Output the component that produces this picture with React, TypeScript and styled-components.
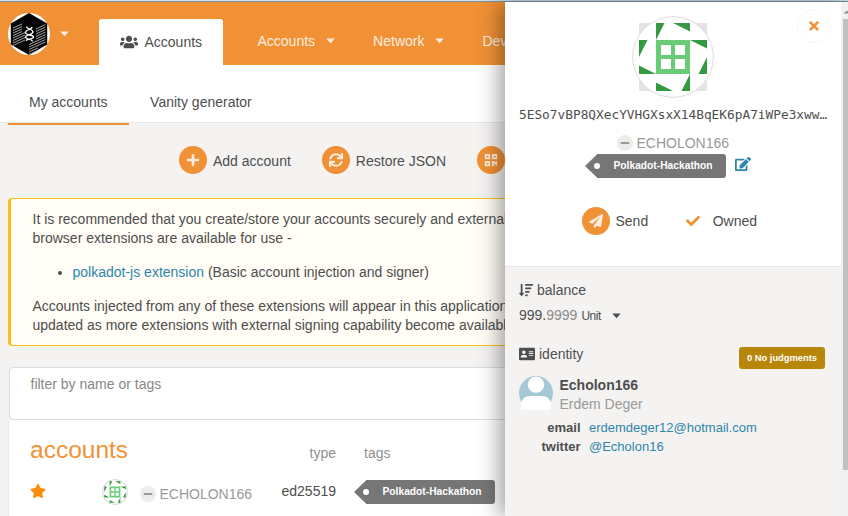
import React from 'react';
import styled, { createGlobalStyle, css } from 'styled-components';
import {
  FaAddressCard, FaCheck, FaEdit, FaMinus, FaPaperPlane, FaPlus, FaQrcode,
  FaSortAmountDown, FaStar, FaSync, FaTimes, FaUsers,
} from 'react-icons/fa';

const ORANGE = '#f19135';
const INK = '#4e4e4e';
const LINK = '#2e86ab';
const PAGE = '#f4f3f2';

const Global = createGlobalStyle`
  * { box-sizing: border-box; }
  html, body { margin: 0; overflow: hidden; }
  body { font: 14px/19px "Liberation Sans", Arial, sans-serif; color: ${INK}; background: ${PAGE}; }
  svg { display: block; flex: none; }
`;

const Shell = styled.div`
  position: relative;
  width: 848px;
  height: 516px;
  overflow: hidden;
  background: ${PAGE};
`;
const WindowEdge = styled.div`
  height: 2px;
  background: #cfe0e8;
  border-bottom: 1px solid #78929d;
`;
const Header = styled.header`
  display: flex;
  align-items: flex-end;
  height: 63px;
  padding-left: 8px;
  background: ${ORANGE};
  white-space: nowrap;
`;
const Brand = styled.div`
  display: flex;
  align-items: center;
  gap: 10px;
  width: 91px;
  height: 63px;
`;
const ActiveTab = styled.div`
  display: flex;
  align-items: center;
  gap: 6.5px;
  width: 124px;
  height: 46px;
  padding-left: 21px;
  border-radius: 3px 3px 0 0;
  background: #fff;
`;
const Menu = styled.nav`
  display: flex;
  gap: 38px;
  padding-left: 34.5px;
  height: 46px;
  align-items: center;
`;
const MenuItem = styled.span`
  display: flex;
  align-items: center;
  gap: 11px;
  height: 44px;
  margin-bottom: 2px;
  color: #fdeee0;
`;
const SubNav = styled.nav`
  display: flex;
  height: 58px;
  padding-left: 8px;
  background: #fff;
  border-bottom: 1px solid #e7e6e6;
`;
const SubTab = styled.span<{ $active?: boolean }>`
  height: 60px;
  padding: 28px 21.5px 0 21px;
  ${p => p.$active && css`border-bottom: 2px solid ${ORANGE};`}
`;
const Actions = styled.div`
  display: flex;
  gap: 31px;
  height: 75px;
  padding: 23px 0 0 179px;
  white-space: nowrap;
`;
const Action = styled.div`
  display: flex;
  align-items: center;
  gap: 6px;
  height: 28px;
`;
const ActionLabel = styled.span`
  padding-top: 2px;
`;
const Round = styled.span`
  display: flex;
  align-items: center;
  justify-content: center;
  width: 28px;
  height: 28px;
  border-radius: 50%;
  background: ${ORANGE};
  color: #fdeee0;
`;
const Notice = styled.section`
  height: 148px;
  margin-left: 8px;
  padding: 11px 0 0 21.5px;
  border: 1px solid #fcc016;
  border-left-width: 3px;
  border-radius: 4px 0 0 4px;
  background: #fffdf5;
  white-space: nowrap;
  p { margin: 0; }
  ul { margin: 15px 0; padding-left: 40px; }
`;
const Link = styled.span`
  color: ${LINK};
`;
const Filter = styled.div`
  height: 53px;
  margin: 21px 0 0 9px;
  padding: 7px 20.5px;
  background: #fff;
  border: 1px solid #dcdcdc;
  border-radius: 4px 0 0 4px;
  color: #888;
`;
const Table = styled.section`
  height: 97px;
  margin-left: 8px;
  background: #fff;
  border-left: 1px solid #ecebea;
`;
const TableHead = styled.div`
  display: flex;
  align-items: center;
  height: 60px;
  padding-left: 21px;
  color: #8f8f8f;
`;
const Title = styled.h1`
  flex: none;
  width: 211px;
  margin: 0;
  font-size: 24.5px;
  font-weight: 400;
  line-height: 30px;
  color: ${ORANGE};
`;
const TypeCell = styled.span`
  width: 95px;
  text-align: right;
`;
const HeadCell = styled(TypeCell)`
  padding-top: 6px;
`;
const TypeValue = styled(TypeCell)`
  padding-bottom: 2px;
`;
const TagsHead = styled.span`
  padding: 6px 0 0 28px;
`;
const TableRow = styled.div`
  display: flex;
  align-items: center;
  height: 24px;
  padding-left: 21px;
`;
const StarCell = styled.span`
  width: 72px;
  padding-bottom: 2px;
  color: #ff8b0a;
`;
const NameCell = styled.span`
  display: flex;
  width: 139px;
  gap: 12px;
  align-items: center;
`;
const Name = styled.span<{ $low?: boolean }>`
  display: flex;
  align-items: center;
  gap: 3.5px;
  color: #999;
  padding-top: ${p => (p.$low ? 4 : 0)}px;
`;
const Dash = styled.span`
  display: flex;
  align-items: center;
  justify-content: center;
  width: 16px;
  height: 16px;
  border-radius: 50%;
  background: #ececea;
  color: #9a9a9a;
`;
const Tag = styled.span`
  position: relative;
  display: block;
  width: 129px;
  height: 24px;
  margin-left: 12px;
  padding-left: 16.5px;
  border-radius: 0 3px 3px 0;
  background: #767676;
  color: #fff;
  font-size: 10.25px;
  font-weight: 700;
  line-height: 24px;
  white-space: nowrap;
  &::before {
    content: '';
    position: absolute;
    top: 0;
    left: -12px;
    width: 12.5px;
    height: 24px;
    background: inherit;
    clip-path: polygon(100% 0, 100% 100%, 0 50%);
  }
  &::after {
    content: '';
    position: absolute;
    top: 9px;
    left: -3px;
    width: 6px;
    height: 6px;
    border-radius: 50%;
    background: #fff;
  }
`;
const TagCell = styled.span`
  padding-left: 18px;
`;

/* Side drawer lying over the page */
const Drawer = styled.aside`
  position: absolute;
  top: 2px;
  right: 0;
  bottom: 0;
  display: flex;
  width: 343px;
  background: ${PAGE};
  box-shadow: -6px 0 20px rgba(0, 0, 0, 0.36);
`;
const DrawerBody = styled.div`
  position: relative;
  width: 336px;
`;
const Track = styled.div`
  display: flex;
  flex-direction: column;
  align-items: center;
  width: 7px;
  padding: 8px 0 0 2px;
  background: #f1f1f1;
`;
const Thumb = styled.span`
  width: 5px;
  height: 451px;
  margin-top: 5px;
  background: #c1c1c1;
`;
const Close = styled.span`
  position: absolute;
  top: 6.5px;
  right: 10.5px;
  display: flex;
  align-items: center;
  justify-content: center;
  width: 34px;
  height: 34px;
  border: 1px solid #fdf6ee;
  border-radius: 50%;
  color: ${ORANGE};
`;
const Profile = styled.section`
  display: flex;
  flex-direction: column;
  align-items: center;
  height: 265px;
  padding-top: 14px;
  background: #fff;
  border-bottom: 1px solid #e8e7e6;
`;
const Address = styled.div`
  width: 308px;
  height: 19px;
  margin-top: 7px;
  font: 12.8px/19px "DejaVu Sans Mono", monospace;
  white-space: nowrap;
`;
const ProfileName = styled.div`
  display: flex;
  height: 16px;
  margin-top: 11px;
  align-items: center;
`;
const ProfileTags = styled.div`
  display: flex;
  width: 336px;
  margin-top: 3px;
  padding-left: 80px;
  gap: 9px;
  color: ${LINK};
  align-items: center;
`;
const EditIcon = styled(FaEdit)`
  margin-bottom: 4px;
`;
const ProfileActions = styled.div`
  display: flex;
  width: 336px;
  margin-top: 29px;
  padding-left: 77px;
  gap: 38px;
`;
const Send = styled(Action)`
  gap: 5.5px;
`;
const Owned = styled(Action)`
  gap: 12.5px;
  svg { color: ${ORANGE}; }
`;
const Details = styled.section`
  padding: 14px 16px 0 14px;
`;
const SectionTitle = styled.div`
  display: flex;
  align-items: center;
  gap: 4px;
  height: 19px;
  svg { margin-bottom: 2px; }
`;
const Balance = styled.div`
  display: flex;
  align-items: baseline;
  height: 19px;
  margin-top: 6px;
`;
const Minor = styled.span`
  color: #8a8a8a;
`;
const Unit = styled.span`
  margin: 0 11px 0 4px;
  font-size: 12px;
  letter-spacing: -0.45px;
`;
const BalanceCaret = styled.span`
  align-self: center;
`;
const IdentityHead = styled.div`
  display: flex;
  justify-content: space-between;
  margin-top: 20px;
  height: 24px;
`;
const Badge = styled.span`
  width: 86px;
  height: 22px;
  margin-top: 2px;
  border-radius: 3px;
  background: #b8860b;
  color: #fff;
  font-size: 9.35px;
  font-weight: 700;
  line-height: 22px;
  text-align: center;
  white-space: nowrap;
`;
const Person = styled.div`
  display: flex;
  gap: 6.5px;
  height: 38px;
  margin-top: 7px;
`;
const Muted = styled.div`
  color: #999;
`;
const Fields = styled.div`
  display: grid;
  grid-template-columns: 61.5px 1fr;
  column-gap: 8.5px;
  margin-top: 4px;
  font-size: 13px;
  b { text-align: right; }
`;
const PersonName = styled.b`
  display: block;
`;

const Caret = ({ color = '#fdeee0' }: { color?: string }) => (
  <svg width="9" height="6" viewBox="0 0 9 6"><path d="M0.3 0.5h8.4L4.5 5.2z" fill={color} /></svg>
);

const Logo = () => {
  const left = [13, 15.5, 18, 20.5, 23, 25.5, 28, 30.5];
  const right = [15, 17.5, 20, 22.5, 25, 27.5, 30, 32.5, 35, 37.5];
  return (
    <svg width="42" height="42" viewBox="0 0 42 42">
      <circle cx="21" cy="21" r="21" fill="#fff" />
      <path d="M21 0 39.2 10.5v21L21 42 2.8 31.5v-21z" fill="#050505" />
      <g stroke="#b4b4b4" strokeWidth="0.9">
        {left.map((y, i) => <path key={y} d={`M5 ${y + 2}L${i < 4 ? 14 : 17} ${y - (i < 4 ? 2 : 3.5)}`} />)}
        {right.map((y, i) => <path key={y} d={`M${i < 5 ? 28 : 21} ${y + (i < 5 ? 1 : 4)}L${i > 7 ? 30 : 37.5} ${y - (i > 7 ? 0 : 3.5)}`} />)}
      </g>
      <path
        d="M18.5 13.5c0 3 6.500 2.500 6.500 5.500s-7.500 2.500-7.500 5 7 2 7 4.500M24 14c0 3-6.500 2.500-6.500 5.500s8 2 8 4.500-6 1.500-7.500 3.500"
        fill="none"
        stroke="#fff"
        strokeWidth="1.3"
      />
    </svg>
  );
};

const Identicon = ({ size, clipped }: { size: number; clipped?: boolean }) => (
  <svg width={size} height={size} viewBox="-7 -7 82 82">
    {!clipped && <path d="M0 0H68V68H0z" fill="#e4e4e4" />}
    <circle cx="34" cy="34" r={clipped ? 39 : 40.4} fill="#fff" stroke="#ddd" strokeWidth={clipped ? 3.5 : 1} />
    <path
      fill="#339a42"
      d="M17 0h8.5L17 17zM34 0h17v8.5zM51 17h17v8.5zM68 34v17h-8.5zM51 51v17h-8.5zM17 59.5V68h17zM0 42.5V51h17zM0 17h8.5L0 34z"
    />
    <path fill="#67cc74" fillRule="evenodd" d="M17 17h34v34H17zM22 22v10h10V22zM36 22v10h10V22zM22 36v10h10V36zM36 36v10h10V36z" />
  </svg>
);

const Avatar = () => (
  <svg width="34" height="34" viewBox="0 0 34 34">
    <circle cx="17" cy="17" r="17" fill="#a5c8d5" />
    <path d="M2 34V29Q3 20 11 20h12q8 0 9 9v3q0 2-2 2H4z" fill="#fff" />
    <circle cx="17" cy="9" r="9.2" fill="#a5c8d5" />
    <circle cx="17" cy="8.6" r="8.2" fill="#fff" />
  </svg>
);

const Account = ({ low }: { low?: boolean }) => (
  <Name $low={low}><Dash><FaMinus size={10} /></Dash>ECHOLON166</Name>
);

export default function App() {
  return (
    <Shell>
      <Global />
      <WindowEdge />
      <Header>
        <Brand><Logo /><Caret /></Brand>
        <ActiveTab><FaUsers size={18} />Accounts</ActiveTab>
        <Menu>
          <MenuItem>Accounts<Caret /></MenuItem>
          <MenuItem>Network<Caret /></MenuItem>
          <MenuItem>Developer</MenuItem>
        </Menu>
      </Header>
      <SubNav>
        <SubTab $active>My accounts</SubTab>
        <SubTab>Vanity generator</SubTab>
      </SubNav>
      <Actions>
        <Action><Round><FaPlus size={14} /></Round><ActionLabel>Add account</ActionLabel></Action>
        <Action><Round><FaSync size={14} /></Round><ActionLabel>Restore JSON</ActionLabel></Action>
        <Action><Round><FaQrcode size={14} /></Round></Action>
      </Actions>
      <Notice>
        <p>It is recommended that you create/store your accounts securely and externally<br />browser extensions are available for use -</p>
        <ul><li><Link>polkadot-js extension</Link> (Basic account injection and signer)</li></ul>
        <p>Accounts injected from any of these extensions will appear in this application<br />updated as more extensions with external signing capability become available</p>
      </Notice>
      <Filter>filter by name or tags</Filter>
      <Table>
        <TableHead>
          <Title>accounts</Title>
          <HeadCell>type</HeadCell>
          <TagsHead>tags</TagsHead>
        </TableHead>
        <TableRow>
          <StarCell><FaStar size={16} /></StarCell>
          <NameCell><Identicon size={26} clipped /><Account low /></NameCell>
          <TypeValue>ed25519</TypeValue>
          <TagCell><Tag>Polkadot-Hackathon</Tag></TagCell>
        </TableRow>
      </Table>
      <Drawer>
        <DrawerBody>
          <Profile>
            <Identicon size={82} />
            <Address>5ESo7vBP8QXecYVHGXsxX14BqEK6pA7iWPe3xww…</Address>
            <ProfileName><Account /></ProfileName>
            <ProfileTags><Tag>Polkadot-Hackathon</Tag><EditIcon size={16} /></ProfileTags>
            <ProfileActions>
              <Send><Round><FaPaperPlane size={14} /></Round>Send</Send>
              <Owned><FaCheck size={14} />Owned</Owned>
            </ProfileActions>
          </Profile>
          <Close><FaTimes size={14} /></Close>
          <Details>
            <SectionTitle><FaSortAmountDown size={14} />balance</SectionTitle>
            <Balance>999.<Minor>9999</Minor><Unit>Unit</Unit><BalanceCaret><Caret color={INK} /></BalanceCaret></Balance>
            <IdentityHead>
              <SectionTitle><FaAddressCard size={16} />identity</SectionTitle>
              <Badge>0 No judgments</Badge>
            </IdentityHead>
            <Person>
              <Avatar />
              <div><PersonName>Echolon166</PersonName><Muted>Erdem Deger</Muted></div>
            </Person>
            <Fields>
              <b>email</b><Link>erdemdeger12@hotmail.com</Link>
              <b>twitter</b><Link>@Echolon16</Link>
            </Fields>
          </Details>
        </DrawerBody>
        <Track>
          <svg width="5" height="4" viewBox="0 0 5 4"><path d="M0.5 3.5 4 0.5 5 1.5v2z" fill="#8b8b8b" /></svg>
          <Thumb />
        </Track>
      </Drawer>
    </Shell>
  );
}
